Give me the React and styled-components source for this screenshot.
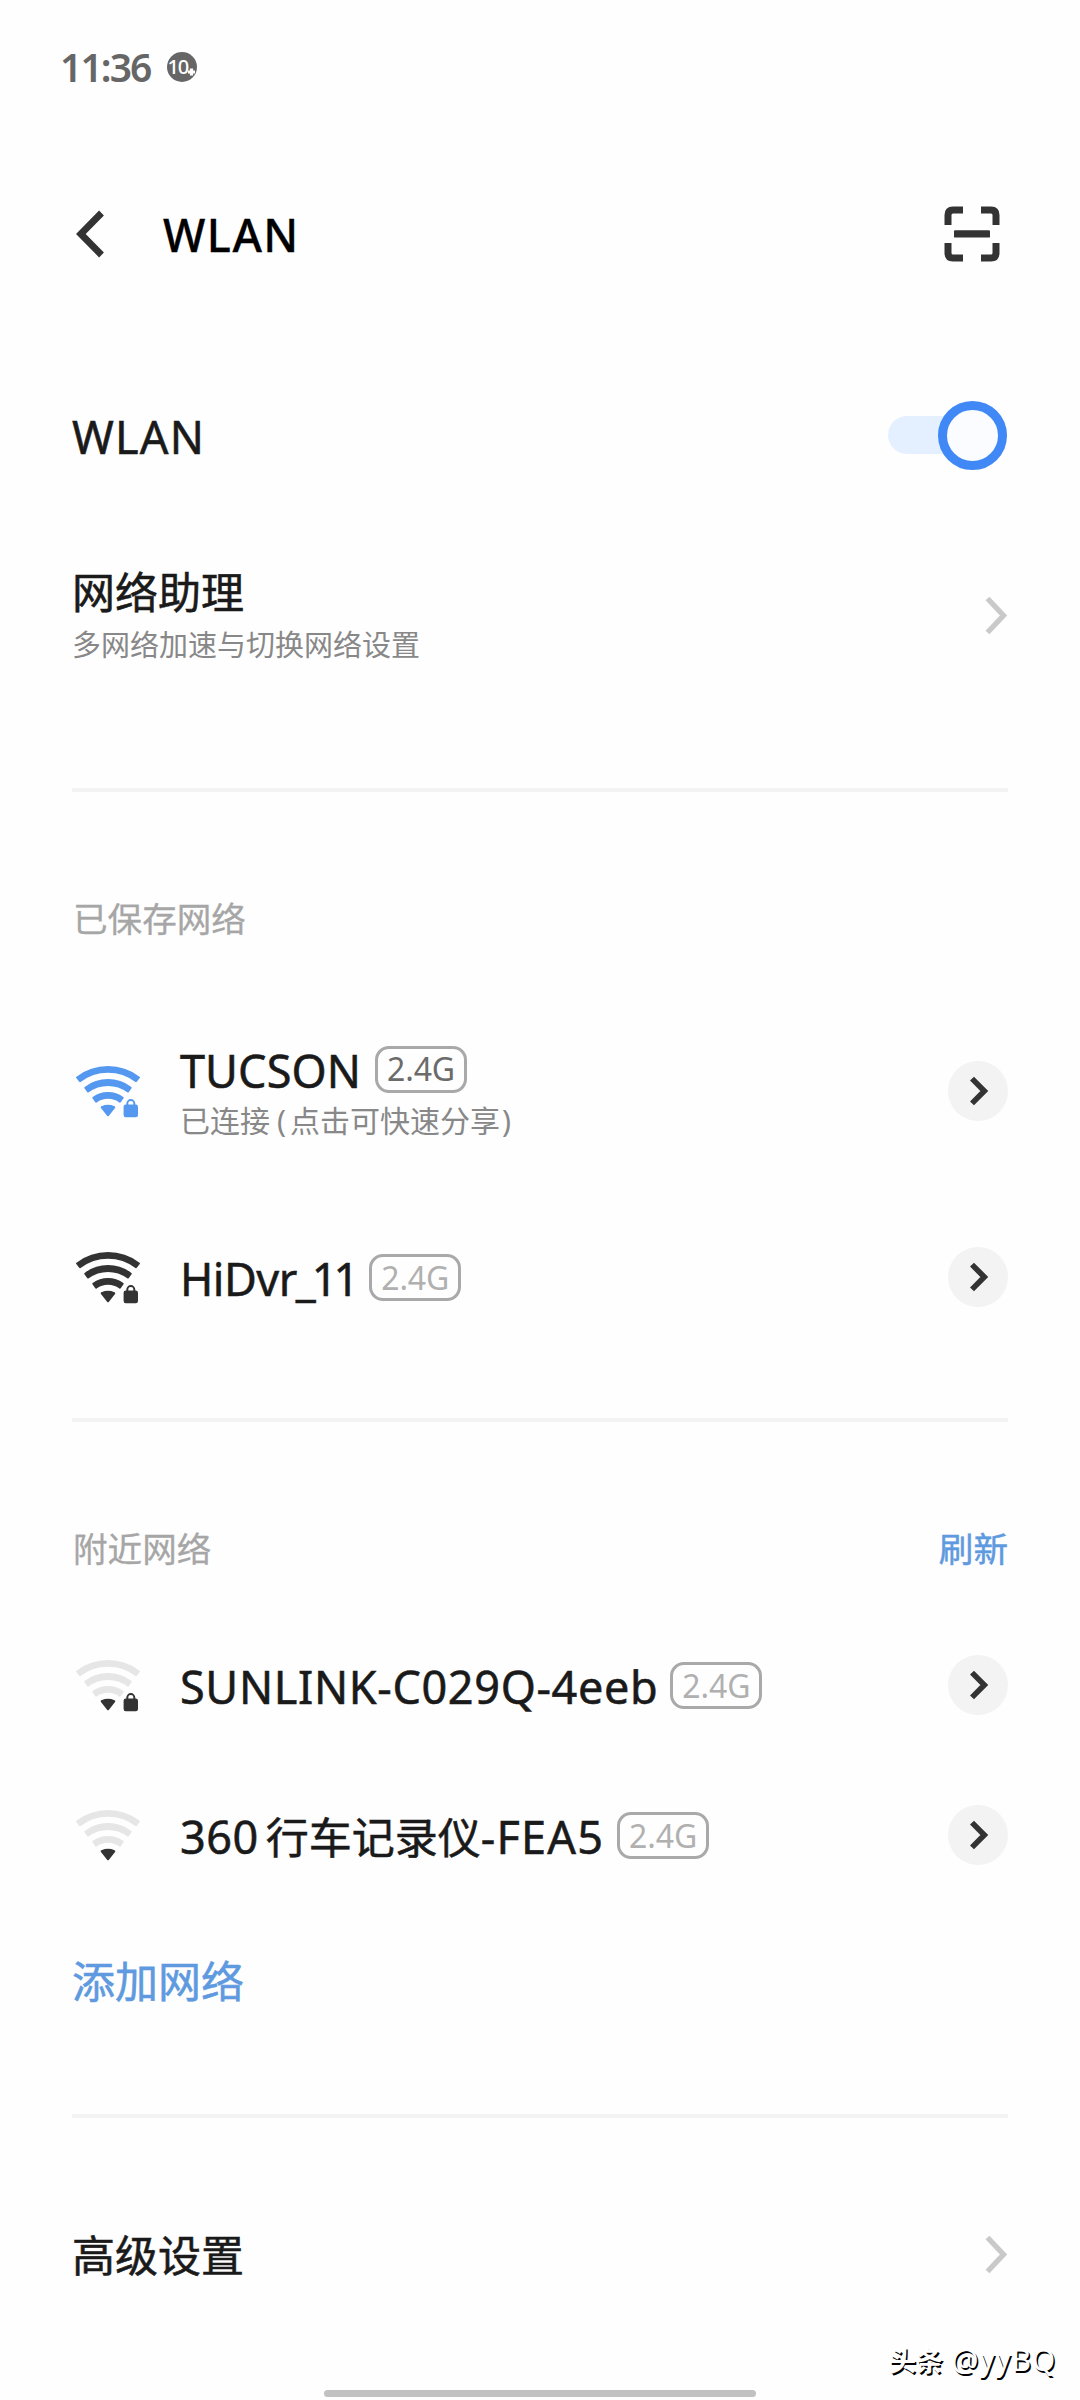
import React from "react";
import styled, { createGlobalStyle, ThemeProvider } from "styled-components";

const theme = {
  primary: "#5598f0",
  link: "#5f9ae0",
  toggle: "#3f88f6",
  toggleTrack: "#e4f0ff",
  text: "#1a1a1a",
  icon: "#333333",
  iconMuted: "#e6e6e6",
  gray: "#888888",
  grayLight: "#a6a6a6",
  chevron: "#c9c9c9",
  line: "#f3f3f3",
};

const GlobalStyles = createGlobalStyle`
  * {
    box-sizing: border-box;
  }
  body {
    margin: 0;
    background: #fefefe;
    font-family: "Noto Sans", "Noto Sans CJK SC", sans-serif;
    color: ${theme.text};
  }
`;

const PageStyles = styled.div`
  position: relative;
  display: flex;
  flex-direction: column;
  width: 1080px;
  height: 2400px;
  padding: 0 72px;
  overflow: hidden;
  background: #fefefe;
  > * {
    flex-shrink: 0;
  }
`;

const StatusBar = styled.div`
  display: flex;
  align-items: center;
  gap: 16px;
  height: 134px;
  margin-left: -12px;
`;

const StatusTime = styled.span`
  font-size: 39px;
  line-height: 40px;
  font-weight: 600;
  letter-spacing: -1.9px;
  color: #666666;
`;

const Header = styled.header`
  display: flex;
  align-items: center;
  height: 200px;
  padding: 0 8px 0 2px;
`;

const HeaderTitle = styled.h1`
  flex: 1;
  margin: 2px 0 0 59px;
  font-size: 45px;
  line-height: 60px;
  font-weight: 500;
  letter-spacing: 1.5px;
  color: #000000;
  -webkit-text-stroke: 0.3px;
`;

const SettingRow = styled.div`
  display: flex;
  align-items: center;
  justify-content: space-between;
  height: ${(props) => props.$height}px;
`;

const Title = styled.div`
  padding-top: 4px;
  font-size: 43px;
  line-height: 56px;
  color: ${(props) => (props.$link ? props.theme.link : props.theme.text)};
  -webkit-text-stroke: 0.55px;
`;

const Latin = styled.span`
  font-size: 45px;
  letter-spacing: ${(props) => props.$spacing || 0}px;
  margin-right: ${(props) => props.$after || 0}px;
`;

const Note = styled.div`
  font-size: ${(props) => props.$size || 29}px;
  line-height: 48px;
  color: ${(props) => props.theme.gray};
  .note__paren {
    margin: 0 4px 0 7px;
    font-family: "Noto Sans";
  }
  .note__paren--close {
    margin: 0 0 0 2px;
  }
`;

const ToggleStyles = styled.div`
  display: flex;
  align-items: center;
  justify-content: flex-end;
  width: 118px;
  height: 38px;
  margin-right: 2px;
  border-radius: 19px;
  background: ${(props) => props.theme.toggleTrack};
  .toggle__knob {
    flex: none;
    width: 69px;
    height: 69px;
    margin-right: -1px;
    border: 9px solid ${(props) => props.theme.toggle};
    border-radius: 50%;
    background: #fafcff;
  }
`;

const Divider = styled.hr`
  width: 100%;
  height: 4px;
  margin: ${(props) => props.$top}px 0 0;
  border: 0;
  background: ${(props) => props.theme.line};
`;

const SectionHead = styled.div`
  display: flex;
  align-items: center;
  justify-content: space-between;
  height: 64px;
  margin: 95px 0 ${(props) => props.$bottom}px;
  padding-left: 1px;
  font-size: 34.6px;
  line-height: 64px;
  color: ${(props) => props.theme.grayLight};
  -webkit-text-stroke: 0.3px;
  .section__action {
    color: ${(props) => props.theme.link};
    -webkit-text-stroke: 0.5px;
  }
`;

const NetworkRow = styled.div`
  display: flex;
  align-items: center;
  height: ${(props) => props.$height}px;
  padding-left: 4px;
  .network__body {
    flex: 1;
    margin-left: 40px;
    padding-top: 1px;
  }
  .network__name {
    display: flex;
    align-items: center;
    white-space: nowrap;
  }
  .network__name + ${Note} {
    margin-top: -3px;
  }
`;

const BandTag = styled.span`
  display: flex;
  align-items: center;
  justify-content: center;
  width: 92px;
  height: 47px;
  margin-left: ${(props) => props.$gap}px;
  border: 3px solid #a9a9a9;
  border-radius: 14px;
  font-size: 32px;
  line-height: 40px;
  letter-spacing: -0.1px;
  color: ${(props) => (props.$active ? "#6b6b6b" : "#b0b0b0")};
`;

const RoundButton = styled.button`
  display: flex;
  align-items: center;
  justify-content: center;
  width: 60px;
  height: 60px;
  padding: 0;
  border: 0;
  border-radius: 50%;
  background: ${(props) => props.theme.line};
`;

const HomeBar = styled.div`
  width: 432px;
  height: 7px;
  margin: auto auto 3px;
  border-radius: 4px;
  background: #c1c1c1;
`;

const Watermark = styled.div`
  position: absolute;
  right: 24px;
  bottom: 19px;
  font-size: 30px;
  line-height: 40px;
  letter-spacing: 0.8px;
  color: #ffffff;
  text-shadow: 1.5px 1.5px 0 #000000;
  white-space: nowrap;
  b {
    font-size: 27px;
    font-weight: 700;
    letter-spacing: 0;
  }
`;

const IconBack = () => (
  <svg width="30" height="48" viewBox="0 0 30 48" fill="none">
    <path
      d="M27.5 3L6.8 24L27.5 45"
      stroke={theme.icon}
      strokeWidth="6.8"
      strokeLinejoin="miter"
    />
  </svg>
);

const IconScan = () => (
  <svg width="56" height="56" viewBox="0 0 56 56" fill="none">
    <g stroke={theme.icon} strokeWidth="7">
      <path d="M4 19V9Q4 4 9 4H19" />
      <path d="M37 4H47Q52 4 52 9V19" />
      <path d="M52 37V47Q52 52 47 52H37" />
      <path d="M19 52H9Q4 52 4 47V37" />
    </g>
    <rect x="10" y="24.2" width="36" height="7.4" rx="1.2" fill={theme.icon} />
  </svg>
);

const IconChevron = () => (
  <svg width="24" height="40" viewBox="0 0 24 40" fill="none">
    <path d="M3.5 3.5L19.5 20.5L3.5 37.5" stroke={theme.chevron} strokeWidth="5.4" />
  </svg>
);

const IconDetail = () => (
  <svg width="60" height="60" viewBox="0 0 60 60" fill="none">
    <path d="M24 17.6L36.3 30L24 42.4" stroke={theme.icon} strokeWidth="5.6" />
  </svg>
);

const IconTenPlus = () => (
  <svg width="30" height="30" viewBox="0 0 30 30">
    <circle cx="15" cy="15" r="15" fill="#666666" />
    <text
      x="0.6"
      y="22"
      fontSize="20"
      fontWeight="500"
      fill="#ffffff"
      letterSpacing="-1.4"
      fontFamily="Noto Sans"
    >
      10
    </text>
    <path d="M24.5 16.5V23.5M21 20H28" stroke="#ffffff" strokeWidth="3.2" />
  </svg>
);

// One wifi arc, cut radially on both sides of the centre
const getBand = (radius) => {
  const outer = radius + 2.4;
  const inner = radius - 2.4;
  const angle = (38.5 * Math.PI) / 180 - 1 / radius;
  const point = (r, side) =>
    `${32 + side * r * Math.sin(angle)} ${52 - r * Math.cos(angle)}`;
  return `M${point(outer, -1)}A${outer} ${outer} 0 0 1 ${point(outer, 1)}L${point(
    inner,
    1
  )}A${inner} ${inner} 0 0 0 ${point(inner, -1)}Z`;
};

const IconWifi = ({ color, weak, locked }) => {
  const bandColor = weak ? theme.iconMuted : color;
  return (
    <svg width="64" height="53" viewBox="0 -1 64 53" fill="none">
      {[48.6, 35.5, 22.7].map((radius) => (
        <path
          key={radius}
          d={getBand(radius)}
          fill={bandColor}
          stroke={bandColor}
          strokeWidth="2"
          strokeLinejoin="round"
        />
      ))}
      <path
        d="M25.9 41.3Q32 38.7 38.1 41.3L32 49Z"
        fill={color}
        stroke={color}
        strokeWidth="2.4"
        strokeLinejoin="round"
      />
      {locked && (
        <>
          <rect x="47.6" y="38.6" width="14.4" height="12.6" rx="2.2" fill={color} />
          <path
            d="M51.3 40V37.6A3.5 3.5 0 0 1 58.3 37.6V40"
            stroke={color}
            strokeWidth="2"
          />
        </>
      )}
    </svg>
  );
};

const savedNetworks = [
  {
    id: "tucson",
    name: <Latin $spacing={0.1}>TUCSON</Latin>,
    gap: 14,
    connected: true,
    locked: true,
  },
  {
    id: "hidvr",
    name: (
      <>
        <Latin $spacing={-0.5} $after={-1}>
          HiDvr
        </Latin>
        <Latin $spacing={-4}>_11</Latin>
      </>
    ),
    gap: 14,
    locked: true,
  },
];

const nearbyNetworks = [
  {
    id: "sunlink",
    name: <Latin $spacing={0.65}>SUNLINK-C029Q-4eeb</Latin>,
    gap: 12,
    locked: true,
    weak: true,
  },
  {
    id: "360",
    name: (
      <>
        <Latin $spacing={0.5} $after={7}>
          360
        </Latin>
        行车记录仪<Latin $spacing={1.2}>-FEA5</Latin>
      </>
    ),
    gap: 13,
    weak: true,
  },
];

const Network = ({ item, height }) => (
  <NetworkRow $height={height}>
    <IconWifi
      color={item.connected ? theme.primary : theme.icon}
      weak={item.weak}
      locked={item.locked}
    ></IconWifi>
    <div className="network__body">
      <div className="network__name">
        <Title>{item.name}</Title>
        <BandTag $gap={item.gap} $active={item.connected}>
          2.4G
        </BandTag>
      </div>
      {item.connected && (
        <Note $size={30}>
          已连接<span className="note__paren">(</span>点击可快速分享
          <span className="note__paren note__paren--close">)</span>
        </Note>
      )}
    </div>
    <RoundButton>
      <IconDetail></IconDetail>
    </RoundButton>
  </NetworkRow>
);

const App = () => {
  return (
    <ThemeProvider theme={theme}>
      <GlobalStyles></GlobalStyles>
      <PageStyles>
        <StatusBar>
          <StatusTime>11:36</StatusTime>
          <IconTenPlus></IconTenPlus>
        </StatusBar>
        <Header>
          <IconBack></IconBack>
          <HeaderTitle>WLAN</HeaderTitle>
          <IconScan></IconScan>
        </Header>
        <SettingRow $height={202}>
          <Title>
            <Latin $spacing={1.2}>WLAN</Latin>
          </Title>
          <ToggleStyles>
            <span className="toggle__knob"></span>
          </ToggleStyles>
        </SettingRow>
        <SettingRow $height={158}>
          <div>
            <Title>网络助理</Title>
            <Note>多网络加速与切换网络设置</Note>
          </div>
          <IconChevron></IconChevron>
        </SettingRow>
        <Divider $top={94}></Divider>

        <SectionHead $bottom={47}>已保存网络</SectionHead>
        {savedNetworks.map((item) => (
          <Network key={item.id} item={item} height={186}></Network>
        ))}
        <Divider $top={48}></Divider>

        <SectionHead $bottom={29}>
          附近网络
          <span className="section__action">刷新</span>
        </SectionHead>
        {nearbyNetworks.map((item) => (
          <Network key={item.id} item={item} height={150}></Network>
        ))}
        <SettingRow $height={140}>
          <Title $link>添加网络</Title>
        </SettingRow>
        <Divider $top={64}></Divider>

        <SettingRow $height={272}>
          <Title>高级设置</Title>
          <IconChevron></IconChevron>
        </SettingRow>
        <HomeBar></HomeBar>
        <Watermark>
          <b>头条</b> @yyBQ
        </Watermark>
      </PageStyles>
    </ThemeProvider>
  );
};

export default App;
